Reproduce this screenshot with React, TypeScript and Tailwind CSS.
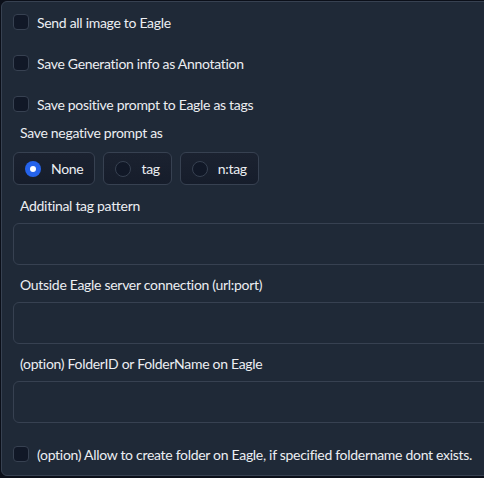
import React from "react";

const Check = ({ label }: { label: string }) => (
  <label className="flex h-[20px] items-center gap-2">
    <span className="h-4 w-4 shrink-0 rounded border border-[#374151] bg-[#111827]" />
    <span className="whitespace-nowrap">{label}</span>
  </label>
);

const Radio = ({ label, checked }: { label: string; checked?: boolean }) => (
  <div className="flex h-[33px] items-center gap-[10px] rounded-md border border-[#374151] bg-gradient-to-t from-[#161d2b] to-[#1b2230] pl-[11px] pr-[11px]">
    {checked ? (
      <span className="flex h-4 w-4 items-center justify-center rounded-full bg-[#2563eb]">
        <span className="h-[6px] w-[6px] rounded-full bg-white" />
      </span>
    ) : (
      <span className="h-4 w-4 rounded-full border border-[#374151] bg-[#111827]" />
    )}
    <span>{label}</span>
  </div>
);

const Field = ({ label, className }: { label: string; className: string }) => (
  <>
    <div className={`h-[20px] pl-[7px] leading-[20px] ${className}`}>{label}</div>
    <div className="mt-[7px] h-[42px] w-[490px] rounded-md border border-[#374151] bg-[#1f2937]" />
  </>
);

export default function App() {
  return (
    <div
      className="h-[478px] w-[484px] overflow-hidden bg-[#0b0f19] text-[14px] tracking-[-0.3px] text-[#eceef2]"
      style={{ fontFamily: "Lato, 'Noto Sans', sans-serif" }}
    >
      <div className="ml-px mt-px flex h-[475px] w-[520px] flex-col rounded-md border border-[#374151] bg-[#1f2937] px-[11px]">
        <div className="mt-[10px]">
          <Check label="Send all image to Eagle" />
        </div>
        <div className="mt-[21px]">
          <Check label="Save Generation info as Annotation" />
        </div>
        <div className="mt-[21px]">
          <Check label="Save positive prompt to Eagle as tags" />
        </div>
        <div className="mt-[9px] h-[20px] pl-[7px] leading-[20px]">Save negative prompt as</div>
        <div className="mt-[9px] flex gap-2">
          <Radio label="None" checked />
          <Radio label="tag" />
          <Radio label="n:tag" />
        </div>
        <Field label="Additinal tag pattern" className="mt-[11px]" />
        <Field label="Outside Eagle server connection (url:port)" className="mt-[10px]" />
        <Field label="(option) FolderID or FolderName on Eagle" className="mt-[10px]" />
        <div className="mt-[21px]">
          <Check label="(option) Allow to create folder on Eagle, if specified foldername dont exists." />
        </div>
      </div>
    </div>
  );
}
